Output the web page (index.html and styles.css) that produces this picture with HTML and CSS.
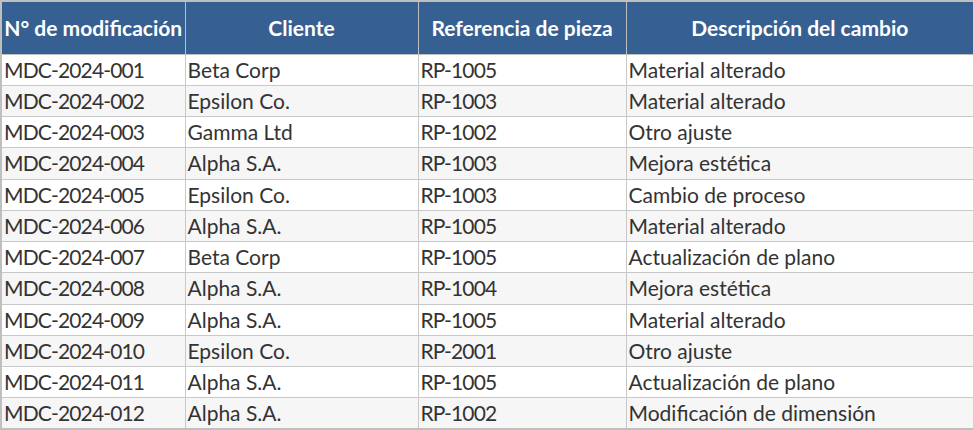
FILE: index.html
```html
<!DOCTYPE html>
<html lang="es">
<head>
<meta charset="utf-8">
<link rel="stylesheet" href="styles.css">
</head>
<body>
<table class="grid">
<colgroup>
<col class="c1"><col class="c2"><col class="c3"><col class="c4">
</colgroup>
<thead>
<tr><th>N° de modificación</th><th>Cliente</th><th>Referencia de pieza</th><th>Descripción del cambio</th></tr>
</thead>
<tbody>
<tr><td>MDC-2024-001</td><td>Beta Corp</td><td>RP-1005</td><td>Material alterado</td></tr>
<tr><td>MDC-2024-002</td><td>Epsilon Co.</td><td>RP-1003</td><td>Material alterado</td></tr>
<tr><td>MDC-2024-003</td><td>Gamma Ltd</td><td>RP-1002</td><td>Otro ajuste</td></tr>
<tr><td>MDC-2024-004</td><td>Alpha S.A.</td><td>RP-1003</td><td>Mejora estética</td></tr>
<tr><td>MDC-2024-005</td><td>Epsilon Co.</td><td>RP-1003</td><td>Cambio de proceso</td></tr>
<tr><td>MDC-2024-006</td><td>Alpha S.A.</td><td>RP-1005</td><td>Material alterado</td></tr>
<tr><td>MDC-2024-007</td><td>Beta Corp</td><td>RP-1005</td><td>Actualización de plano</td></tr>
<tr><td>MDC-2024-008</td><td>Alpha S.A.</td><td>RP-1004</td><td>Mejora estética</td></tr>
<tr><td>MDC-2024-009</td><td>Alpha S.A.</td><td>RP-1005</td><td>Material alterado</td></tr>
<tr><td>MDC-2024-010</td><td>Epsilon Co.</td><td>RP-2001</td><td>Otro ajuste</td></tr>
<tr><td>MDC-2024-011</td><td>Alpha S.A.</td><td>RP-1005</td><td>Actualización de plano</td></tr>
<tr><td>MDC-2024-012</td><td>Alpha S.A.</td><td>RP-1002</td><td>Modificación de dimensión</td></tr>
</tbody>
</table>
</body>
</html>
```
FILE: styles.css
```css
html, body {
  margin: 0;
  padding: 0;
  background: #ffffff;
}
.grid {
  border-collapse: collapse;
  table-layout: fixed;
  width: 973px;
  font-family: Lato, "Liberation Sans", sans-serif;
  font-size: 21px;
  color: #333333;
  border: 2px solid #bfbfbf;
}
.c1 { width: 184px; }
.c2 { width: 233px; }
.c3 { width: 208px; }
.c4 { width: 348px; }
.grid th {
  background: #366092;
  color: #ffffff;
  font-weight: bold;
  height: 53px;
  padding: 0;
  text-align: center;
  border: 1px solid #bfbfbf;
  white-space: nowrap;
  box-sizing: border-box;
}
.grid td {
  height: 31.25px;
  padding: 0 2px;
  line-height: 24px;
  border: 1px solid #c8c8c8;
  white-space: nowrap;
  overflow: hidden;
  box-sizing: border-box;
}
.grid td:nth-child(1),
.grid td:nth-child(3) {
  letter-spacing: -0.85px;
}
.grid tbody tr:nth-child(even) td {
  background: #f6f6f6;
}
```
